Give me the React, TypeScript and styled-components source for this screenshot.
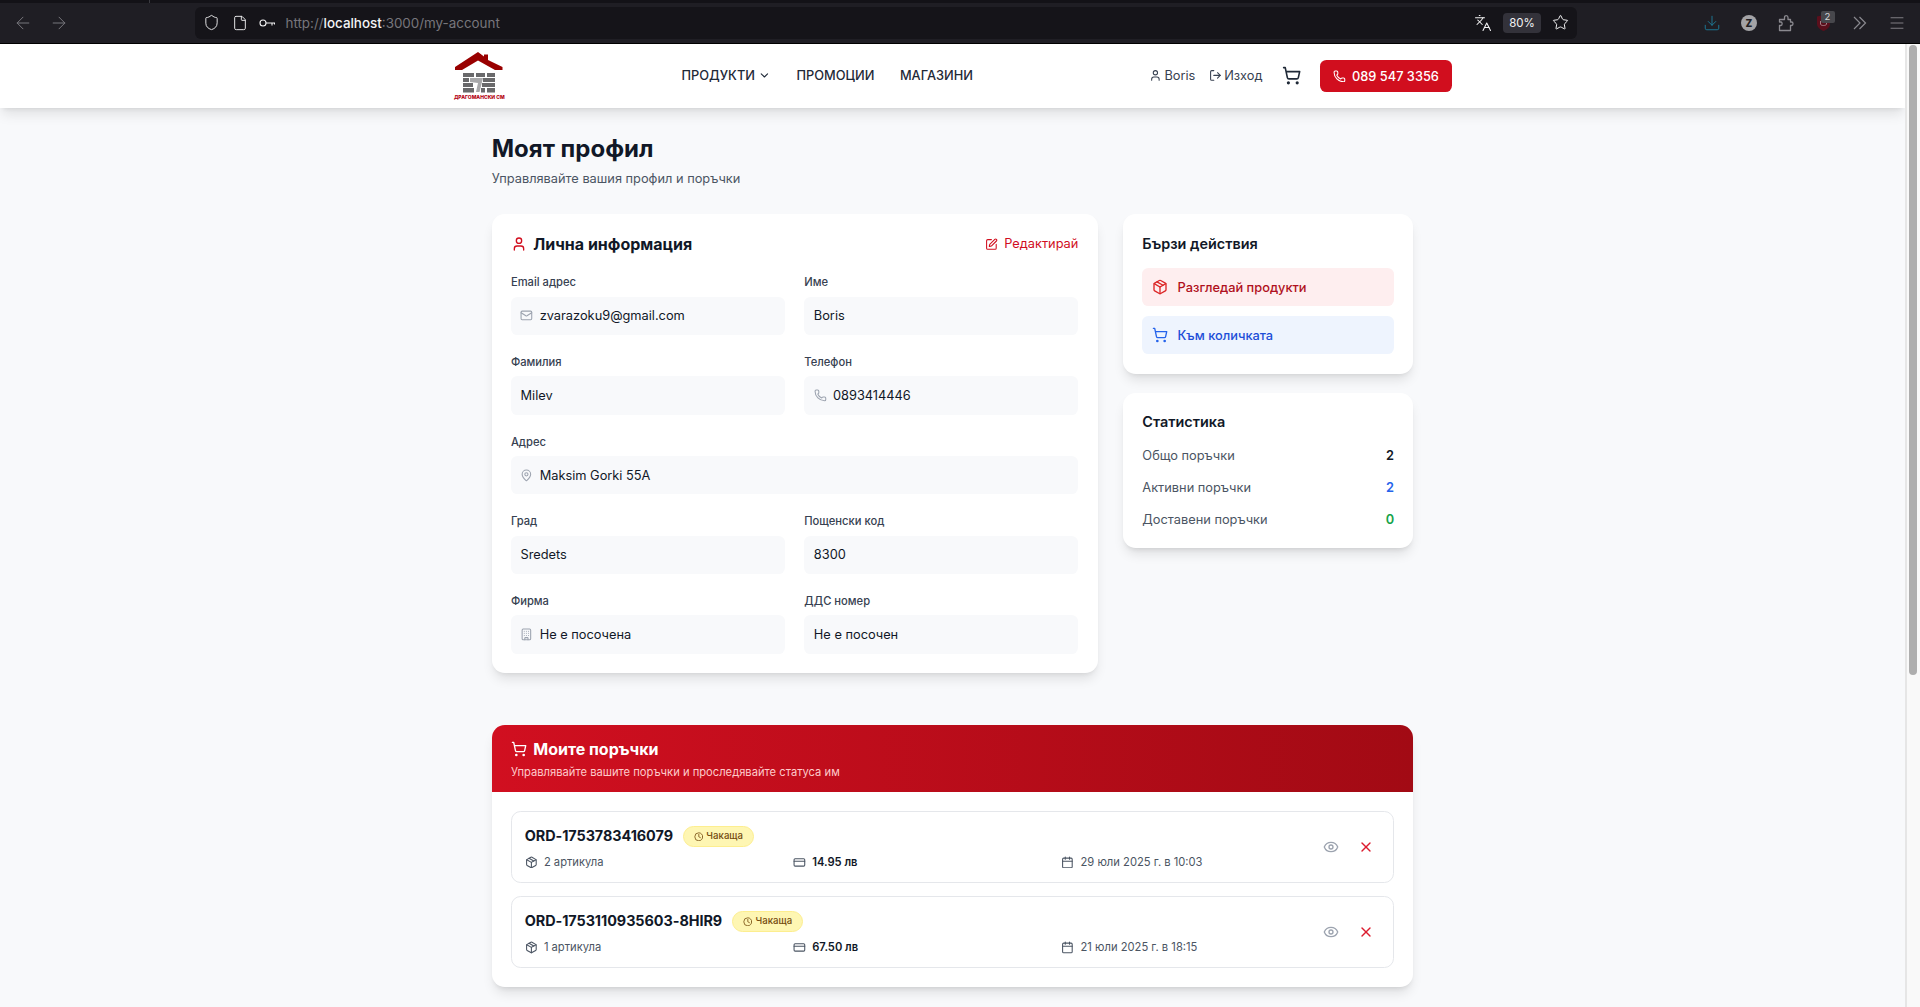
import styled, { createGlobalStyle } from 'styled-components';
import {
  ArrowLeft,
  ArrowRight,
  Building,
  Calendar,
  ChevronDown,
  Clock,
  CreditCard,
  Download,
  Eye,
  File,
  Languages,
  LogOut,
  Mail,
  MapPin,
  Menu,
  Package,
  Phone,
  Shield,
  ShoppingCart,
  SquarePen,
  Star,
  User,
  X,
} from 'lucide-react';

const RED = '#d10e1e';

const GlobalStyle = createGlobalStyle`
  html, body {
    margin: 0;
    height: 100%;
    overflow: hidden;
  }
  body {
    font-family: Inter, "Noto Sans", sans-serif;
    color: #111827;
  }
  * {
    box-sizing: border-box;
  }
`;

const Shell = styled.div`
  height: 100vh;
  display: flex;
  flex-direction: column;
`;

/* browser chrome */
const TabStrip = styled.div`
  height: 3px;
  flex: none;
  background: #131217;
  padding-left: 149px;
`;

const TabEdge = styled.div`
  width: 1px;
  height: 3px;
  background: #3a3a40;
`;

const Toolbar = styled.div`
  height: 41px;
  flex: none;
  display: flex;
  align-items: center;
  background: #1f1e24;
  border-bottom: 1px solid #000;
  padding: 0 0 1px 13px;
  color: #77767c;
`;

const HistoryButtons = styled.div`
  width: 182px;
  flex: none;
  display: flex;
  gap: 16px;
`;

const UrlBar = styled.div`
  width: 1382px;
  height: 32px;
  flex: none;
  display: flex;
  align-items: center;
  background: #151419;
  border-radius: 6px;
  padding: 0 8px;
  color: #f2f2f3;
`;

const UrlIcons = styled.div`
  display: flex;
  align-items: center;
  gap: 11.5px;
  margin-right: 10.5px;
`;

const UrlText = styled.div`
  flex: 1;
  font-size: 13.4px;
  color: #77767c;
`;

const UrlHost = styled.span`
  color: #f4f4f5;
  font-weight: 500;
`;

const ZoomPill = styled.div`
  width: 38px;
  height: 20px;
  margin: 0 11px;
  display: flex;
  align-items: center;
  justify-content: center;
  background: #33323a;
  border-radius: 4px;
  font-size: 11.5px;
  color: #f4f4f5;
`;

const Extensions = styled.div`
  display: flex;
  align-items: center;
  gap: 19px;
  margin-left: 126px;
  color: #8a898f;
`;

const ZBadge = styled.div`
  width: 16px;
  height: 16px;
  margin: 0 1px;
  border-radius: 50%;
  background: #a3a3a6;
  color: #1f1e24;
  font-size: 10px;
  font-weight: 800;
  display: flex;
  align-items: center;
  justify-content: center;
`;

const ShieldExt = styled.div`
  position: relative;
  width: 15px;
  height: 16px;
  margin: 0 1.5px;
`;

const ExtCount = styled.span`
  position: absolute;
  top: -4px;
  left: 5px;
  width: 14px;
  height: 12px;
  background: #47474c;
  border-radius: 2px;
  color: #d4d4d6;
  font-size: 9.6px;
  line-height: 12px;
  text-align: center;
`;

/* page frame */
const Viewport = styled.div`
  flex: 1;
  min-height: 0;
  display: flex;
`;

const Page = styled.div`
  flex: 1;
  min-width: 0;
  overflow: hidden;
  background: #f8f9fb;
`;

const ScrollTrack = styled.div`
  width: 15px;
  flex: none;
  background: #f9f9f9;
  border-left: 2px solid #e6e6e6;
  padding: 1px 3px 0 2px;
`;

const ScrollThumb = styled.div`
  height: 630px;
  background: #aeaeae;
  border-radius: 4px;
`;

/* site header */
const SiteHeader = styled.header`
  position: relative;
  height: 64px;
  background: #fff;
  box-shadow: 0 8px 12px -2.4px rgba(0, 0, 0, 0.1), 0 3.2px 4.8px -3.2px rgba(0, 0, 0, 0.1);
`;

const HeaderInner = styled.div`
  width: 1024px;
  height: 100%;
  margin: 0 auto;
  padding: 0 12.8px;
  display: flex;
  align-items: center;
  justify-content: space-between;
`;

const Logo = styled.div`
  width: 52px;
  display: flex;
  flex-direction: column;
  align-items: center;
`;

const LogoText = styled.span`
  margin-top: 1px;
  font-size: 5px;
  line-height: 6px;
  font-weight: 800;
  color: #b3000f;
  white-space: nowrap;
`;

const Nav = styled.nav`
  display: flex;
  align-items: center;
  gap: 25.6px;
  padding-bottom: 1px;
`;

const NavLink = styled.a`
  display: flex;
  align-items: center;
  gap: 3.2px;
  font-size: 12.8px;
  font-weight: 500;
  color: #1f2937;
`;

const HeaderActions = styled.div`
  display: flex;
  align-items: center;
  gap: 19.2px;
`;

const UserLinks = styled.div`
  display: flex;
  align-items: center;
  gap: 13.6px;
  padding-bottom: 1px;
`;

const UserLink = styled.a`
  display: flex;
  align-items: center;
  gap: 2.4px;
  font-size: 12.8px;
  color: #374151;
`;

const PhoneButton = styled.a`
  height: 32px;
  padding: 0 12.8px;
  display: flex;
  align-items: center;
  gap: 6.4px;
  background: ${RED};
  border-radius: 6.4px;
  color: #fff;
  font-size: 12.8px;
  font-weight: 500;
`;

/* main content */
const Main = styled.main`
  width: 921.6px;
  margin: 0 auto;
  padding-top: 27.2px;
`;

const PageTitle = styled.h1`
  margin: 0;
  font-size: 24px;
  line-height: 28.8px;
  font-weight: 700;
  color: #111827;
`;

const PageSubtitle = styled.p`
  margin: 4.8px 0 25.6px;
  font-size: 12.8px;
  line-height: 19.2px;
  color: #4b5563;
`;

const Columns = styled.div`
  display: grid;
  grid-template-columns: 605.87px 290.13px;
  gap: 25.6px;
  align-items: start;
`;

const Card = styled.section`
  background: #fff;
  border-radius: 12.8px;
  box-shadow: 0 8px 12px -2.4px rgba(0, 0, 0, 0.1), 0 3.2px 4.8px -3.2px rgba(0, 0, 0, 0.1);
`;

const PaddedCard = styled(Card)`
  padding: 19.2px;
`;

const StatsCard = styled(PaddedCard)`
  padding-top: 18.2px;
  padding-bottom: 19px;
`;

const Sidebar = styled.div`
  display: flex;
  flex-direction: column;
  gap: 19.2px;
`;

const CardHead = styled.div`
  display: flex;
  align-items: center;
  justify-content: space-between;
  margin-bottom: 19.2px;
`;

const CardHeading = styled.h2`
  margin: 0;
  display: flex;
  align-items: center;
  gap: 6.4px;
  font-size: 16px;
  line-height: 22.4px;
  font-weight: 700;
  color: inherit;
`;

const EditLink = styled.a`
  display: flex;
  align-items: center;
  gap: 6.4px;
  font-size: 12.8px;
  color: ${RED};
`;

const FieldGrid = styled.div`
  display: grid;
  grid-template-columns: 1fr 1fr;
  gap: 19.2px;
`;

const Field = styled.div<{ $wide?: boolean }>`
  grid-column: ${(p) => (p.$wide ? '1 / -1' : 'auto')};
`;

const FieldLabel = styled.label`
  display: block;
  margin-bottom: 6.4px;
  font-size: 11.2px;
  line-height: 16px;
  font-weight: 500;
  color: #374151;
`;

const FieldValue = styled.div`
  height: 38.1px;
  padding: 0 9.6px;
  display: flex;
  align-items: center;
  gap: 6.4px;
  background: #f8f9fb;
  border-radius: 6.4px;
  font-size: 12.8px;
  color: #111827;
`;

const SideTitle = styled.h3`
  margin: 0 0 12.8px;
  font-size: 14.4px;
  line-height: 22.4px;
  font-weight: 600;
  color: #111827;
`;

const ActionList = styled.div`
  display: flex;
  flex-direction: column;
  gap: 9.6px;
`;

const ActionLink = styled.a<{ $tone: 'red' | 'blue' }>`
  height: 38.4px;
  padding: 0 9.6px;
  display: flex;
  align-items: center;
  gap: 9.6px;
  border-radius: 6.4px;
  font-size: 12.8px;
  font-weight: 500;
  background: ${(p) => (p.$tone === 'red' ? '#feeeef' : '#eef4fe')};
  color: ${(p) => (p.$tone === 'red' ? '#b01020' : '#1d4ed8')};
  svg {
    color: ${(p) => (p.$tone === 'red' ? '#dc2626' : '#2563eb')};
  }
`;

const StatList = styled.div`
  display: flex;
  flex-direction: column;
  gap: 12.8px;
`;

const StatRow = styled.div`
  display: flex;
  justify-content: space-between;
  font-size: 12.8px;
  line-height: 19.2px;
  color: #4b5563;
`;

const StatValue = styled.span<{ $color: string }>`
  font-weight: 600;
  color: ${(p) => p.$color};
`;

/* orders */
const OrdersCard = styled(Card)`
  margin-top: 52.4px;
  overflow: hidden;
`;

const OrdersHead = styled.div`
  padding: 12.8px 19.2px;
  background: linear-gradient(to right, #d10f20, #a20a14);
  color: #fff;
`;

const OrdersHint = styled.p`
  margin: 3.2px 0 0;
  font-size: 11.2px;
  line-height: 16px;
  color: #fecaca;
`;

const OrdersList = styled.div`
  padding: 18.4px 19.2px 19.2px;
  display: flex;
  flex-direction: column;
  gap: 12.8px;
`;

const OrderItem = styled.article`
  display: flex;
  align-items: center;
  padding: 13.6px 12.8px 12px;
  border: 1px solid #e5e7eb;
  border-radius: 9.6px;
`;

const OrderBody = styled.div`
  width: 791.7px;
  flex: none;
`;

const OrderTop = styled.div`
  display: flex;
  align-items: center;
  gap: 9.6px;
  margin-bottom: 6.4px;
`;

const OrderNumber = styled.span`
  font-size: 14.4px;
  line-height: 22.4px;
  font-weight: 700;
  letter-spacing: -0.05px;
  color: #111827;
`;

const StatusBadge = styled.span`
  display: flex;
  align-items: center;
  gap: 3.2px;
  padding: 3.2px 10px;
  background: #fef6b3;
  border: 1px solid #fdee8f;
  border-radius: 999px;
  font-size: 9.6px;
  line-height: 12.8px;
  font-weight: 500;
  color: #744a0e;
`;

const OrderMeta = styled.div`
  display: grid;
  grid-template-columns: repeat(3, 1fr);
  gap: 13.3px;
`;

const MetaItem = styled.div`
  display: flex;
  align-items: center;
  gap: 6.4px;
  font-size: 11.2px;
  line-height: 16px;
  color: #4b5563;
`;

const MetaStrong = styled.span`
  font-weight: 600;
  color: #111827;
`;

const OrderActions = styled.div`
  display: flex;
  gap: 6.4px;
  margin-top: -1.6px;
`;

const IconButton = styled.button<{ $danger?: boolean }>`
  width: 28.8px;
  height: 28.8px;
  padding: 0;
  display: flex;
  align-items: center;
  justify-content: center;
  background: none;
  border: 0;
  color: ${(p) => (p.$danger ? '#dc1c2e' : '#9ca3af')};
`;

const LogoMark = () => (
  <svg width="52" height="41" viewBox="0 0 52 41">
    <path d="M25 0 L31 4.5 V2.5 H35 V8 L49.5 15 V18 H42 L25 8.5 L9 18 H2 V15 Z" fill="#990000" />
    <g fill="#69696b">
      <path d="M10 21 H21 V25 H10 Z M23 21 H32 V25 H23 Z M34 21 H42 V25 H34 Z" />
      <path d="M10 26 H16 V30 H10 Z M30 26 H42 V30 H30 Z" />
      <path d="M10 31 H20 V35 H10 Z M29 31 H42 V35 H29 Z" />
      <path d="M10 36 H21 V40.5 H10 Z M28 36 H32 V40.5 H28 Z M34 36 H42 V40.5 H34 Z" />
      <path d="M17 26 H30 L29 30 L26.5 40 H23 L25 31 L17 30 Z" fill="#a8a8aa" />
    </g>
  </svg>
);

const KeyIcon = () => (
  <svg width="16" height="16" viewBox="0 0 16 16" fill="none" stroke="currentColor" strokeWidth="1.1">
    <circle cx="4" cy="8" r="3" />
    <path d="M7 8 H16 M13 8 V10.5 M15.5 8 V9.5" />
  </svg>
);

const PuzzleIcon = () => (
  <svg width="18" height="18" viewBox="0 0 18 18" fill="none" stroke="currentColor" strokeWidth="1.3" strokeLinejoin="round">
    <path d="M2.5 16.5 V11.5 H4 C5.5 11.5 5.5 8 4 8 H2.5 V5.5 H7.5 V3.5 C7.5 1 11 1 11 3.5 V5.5 H13.5 V8 H14.5 C16.5 8 16.5 11.5 14.5 11.5 H13.5 V16.5 Z" />
  </svg>
);

const UblockIcon = () => (
  <svg width="15" height="16" viewBox="0 0 15 16">
    <path d="M1 1.5 L7.5 0 L14 1.5 V9 C14 12 11 14.5 7.5 16 C4 14.5 1 12 1 9 Z" fill="#5a0f1c" />
    <path d="M4.5 6 V9 C4.5 11 10.5 11 10.5 9 V6" fill="none" stroke="#a98088" strokeWidth="1" />
  </svg>
);

const OverflowIcon = () => (
  <svg width="18" height="18" viewBox="0 0 18 18" fill="none" stroke="currentColor" strokeWidth="1.2">
    <path d="M3 3 L9 9 L3 15 M8.5 3 L14.5 9 L8.5 15" />
  </svg>
);

const fields = [
  { label: 'Email адрес', value: 'zvarazoku9@gmail.com', icon: Mail },
  { label: 'Име', value: 'Boris' },
  { label: 'Фамилия', value: 'Milev' },
  { label: 'Телефон', value: '0893414446', icon: Phone },
  { label: 'Адрес', value: 'Maksim Gorki 55A', icon: MapPin, wide: true },
  { label: 'Град', value: 'Sredets' },
  { label: 'Пощенски код', value: '8300' },
  { label: 'Фирма', value: 'Не е посочена', icon: Building },
  { label: 'ДДС номер', value: 'Не е посочен' },
];

const orders = [
  { id: 'ORD-1753783416079', items: '2 артикула', total: '14.95 лв', date: '29 юли 2025 г. в 10:03' },
  { id: 'ORD-1753110935603-8HIR9', items: '1 артикула', total: '67.50 лв', date: '21 юли 2025 г. в 18:15' },
];

const stats = [
  { label: 'Общо поръчки', value: 2, color: '#111827' },
  { label: 'Активни поръчки', value: 2, color: '#2563eb' },
  { label: 'Доставени поръчки', value: 0, color: '#16a34a' },
];

export default function App() {
  return (
    <Shell>
      <GlobalStyle />
      <TabStrip>
        <TabEdge />
      </TabStrip>
      <Toolbar>
        <HistoryButtons>
          <ArrowLeft size={20} strokeWidth={1.2} />
          <ArrowRight size={20} strokeWidth={1.2} />
        </HistoryButtons>
        <UrlBar>
          <UrlIcons>
            <Shield size={17} strokeWidth={1.3} />
            <File size={16} strokeWidth={1.4} />
            <KeyIcon />
          </UrlIcons>
          <UrlText>
            http://<UrlHost>localhost</UrlHost>:3000/my-account
          </UrlText>
          <Languages size={18} strokeWidth={1.4} />
          <ZoomPill>80%</ZoomPill>
          <Star size={17} strokeWidth={1.4} />
        </UrlBar>
        <Extensions>
          <Download size={18} strokeWidth={1.2} color="#1d7f9e" />
          <ZBadge>Z</ZBadge>
          <PuzzleIcon />
          <ShieldExt>
            <UblockIcon />
            <ExtCount>2</ExtCount>
          </ShieldExt>
          <OverflowIcon />
          <Menu size={18} strokeWidth={1.2} />
        </Extensions>
      </Toolbar>
      <Viewport>
        <Page>
          <SiteHeader>
            <HeaderInner>
              <Logo>
                <LogoMark />
                <LogoText>ДРАГОМАНСКИ СМ</LogoText>
              </Logo>
              <Nav>
                <NavLink>
                  ПРОДУКТИ <ChevronDown size={12.8} />
                </NavLink>
                <NavLink>ПРОМОЦИИ</NavLink>
                <NavLink>МАГАЗИНИ</NavLink>
              </Nav>
              <HeaderActions>
                <UserLinks>
                  <UserLink>
                    <User size={12.8} />
                    Boris
                  </UserLink>
                  <UserLink>
                    <LogOut size={12.8} />
                    Изход
                  </UserLink>
                </UserLinks>
                <ShoppingCart size={19.2} color="#1f2937" />
                <PhoneButton>
                  <Phone size={12.8} />
                  089 547 3356
                </PhoneButton>
              </HeaderActions>
            </HeaderInner>
          </SiteHeader>
          <Main>
            <PageTitle>Моят профил</PageTitle>
            <PageSubtitle>Управлявайте вашия профил и поръчки</PageSubtitle>
            <Columns>
              <PaddedCard>
                <CardHead>
                  <CardHeading>
                    <User size={16} color={RED} />
                    Лична информация
                  </CardHeading>
                  <EditLink>
                    <SquarePen size={12.8} />
                    Редактирай
                  </EditLink>
                </CardHead>
                <FieldGrid>
                  {fields.map((f) => (
                    <Field key={f.label} $wide={f.wide}>
                      <FieldLabel>{f.label}</FieldLabel>
                      <FieldValue>
                        {f.icon && <f.icon size={12.8} color="#9ca3af" />}
                        {f.value}
                      </FieldValue>
                    </Field>
                  ))}
                </FieldGrid>
              </PaddedCard>
              <Sidebar>
                <PaddedCard>
                  <SideTitle>Бързи действия</SideTitle>
                  <ActionList>
                    <ActionLink $tone="red">
                      <Package size={16} />
                      Разгледай продукти
                    </ActionLink>
                    <ActionLink $tone="blue">
                      <ShoppingCart size={16} />
                      Към количката
                    </ActionLink>
                  </ActionList>
                </PaddedCard>
                <StatsCard>
                  <SideTitle>Статистика</SideTitle>
                  <StatList>
                    {stats.map((s) => (
                      <StatRow key={s.label}>
                        {s.label}
                        <StatValue $color={s.color}>{s.value}</StatValue>
                      </StatRow>
                    ))}
                  </StatList>
                </StatsCard>
              </Sidebar>
            </Columns>
            <OrdersCard>
              <OrdersHead>
                <CardHeading>
                  <ShoppingCart size={16} />
                  Моите поръчки
                </CardHeading>
                <OrdersHint>Управлявайте вашите поръчки и проследявайте статуса им</OrdersHint>
              </OrdersHead>
              <OrdersList>
                {orders.map((o) => (
                  <OrderItem key={o.id}>
                    <OrderBody>
                      <OrderTop>
                        <OrderNumber>{o.id}</OrderNumber>
                        <StatusBadge>
                          <Clock size={9.6} />
                          Чакаща
                        </StatusBadge>
                      </OrderTop>
                      <OrderMeta>
                        <MetaItem>
                          <Package size={12.8} />
                          {o.items}
                        </MetaItem>
                        <MetaItem>
                          <CreditCard size={12.8} />
                          <MetaStrong>{o.total}</MetaStrong>
                        </MetaItem>
                        <MetaItem>
                          <Calendar size={12.8} />
                          {o.date}
                        </MetaItem>
                      </OrderMeta>
                    </OrderBody>
                    <OrderActions>
                      <IconButton>
                        <Eye size={16} />
                      </IconButton>
                      <IconButton $danger>
                        <X size={16} />
                      </IconButton>
                    </OrderActions>
                  </OrderItem>
                ))}
              </OrdersList>
            </OrdersCard>
          </Main>
        </Page>
        <ScrollTrack>
          <ScrollThumb />
        </ScrollTrack>
      </Viewport>
    </Shell>
  );
}
